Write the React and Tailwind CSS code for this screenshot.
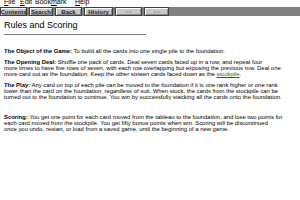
import React from 'react';

const buttons = [
  { label: 'Contents', w: 'w-[27px]', on: true },
  { label: 'Search', w: 'w-[24px]', on: true },
  { label: 'Back', w: 'w-[27px]', on: true },
  { label: 'History', w: 'w-[29px]', on: true },
  { label: '<<', w: 'w-[27px]', on: false },
  { label: '>>', w: 'w-[25px]', on: false },
];

const ToolButton = ({ label, w, on }) => (
  <div
    className={`${w} h-full flex items-center justify-center bg-[#c8c8c8] border border-[#404040] shadow-[inset_1px_1px_0_#fff,inset_-1px_-1px_0_#8a8a8a] text-[6px] font-bold leading-none ${
      on ? 'text-[#202020]' : 'text-[#9a9a9a]'
    }`}
  >
    {label}
  </div>
);

const Line = ({ children }) => <div className="whitespace-nowrap">{children}</div>;

const App = () => {
  return (
    <div className="w-[300px] h-[200px] overflow-hidden bg-white font-['Liberation_Sans',Arial,sans-serif] text-black">
      {/* menu bar, top cut off */}
      <div className="h-[7px] overflow-hidden bg-white">
        <div className="flex pl-[4px] -mt-[3px] text-[7px] leading-[9px]">
          <span className="w-[16px]"><u>F</u>ile</span>
          <span className="w-[15px]"><u>E</u>dit</span>
          <span className="w-[40px]">Book<u>m</u>ark</span>
          <span><u>H</u>elp</span>
        </div>
      </div>

      {/* button bar */}
      <div className="h-[9px] flex gap-[2px] bg-[#808080]">
        {buttons.map(b => (
          <ToolButton key={b.label} {...b} />
        ))}
      </div>

      {/* topic */}
      <div className="px-[4px] pt-[4px]">
        <div className="text-[9px] leading-[11px]">Rules and Scoring</div>
        <div className="mt-[3px] w-[142px] border-t border-[#808080]" />

        <div className="mt-[13px] text-[5.9px] leading-[6px] flex flex-col gap-[5px]">
          <div>
            <Line>
              <b>The Object of the Game:</b> To build all the cards into one single pile to the foundation.
            </Line>
          </div>
          <div>
            <Line>
              <b>The Opening Deal:</b> Shuffle one pack of cards. Deal seven cards faced up in a row, and repeat four
            </Line>
            <Line>more times to have five rows of seven, with each row overlapping but exposing the previous row. Deal one</Line>
            <Line>
              more card out as the foundation. Keep the other sixteen cards faced down as the{' '}
              <span className="text-[#008000] underline">stockpile</span>.
            </Line>
          </div>
          <div>
            <Line>
              <b>The Play:</b> Any card on top of each pile can be moved to the foundation if it is one rank higher or one rank
            </Line>
            <Line>lower than the card on the foundation, regardless of suit. When stuck, the cards from the stockpile can be</Line>
            <Line>turned out to the foundation to continue. You win by successfully stacking all the cards onto the foundation.</Line>
          </div>
          <div className="mt-[9px]">
            <Line>
              <b>Scoring:</b> You get one point for each card moved from the tableau to the foundation, and lose two points for
            </Line>
            <Line>each card moved from the stockpile. You get fifty bonus points when win. Scoring will be discontinued</Line>
            <Line>once you undo, restart, or load from a saved game, until the beginning of a new game.</Line>
          </div>
        </div>
      </div>
    </div>
  );
};

export default App;
